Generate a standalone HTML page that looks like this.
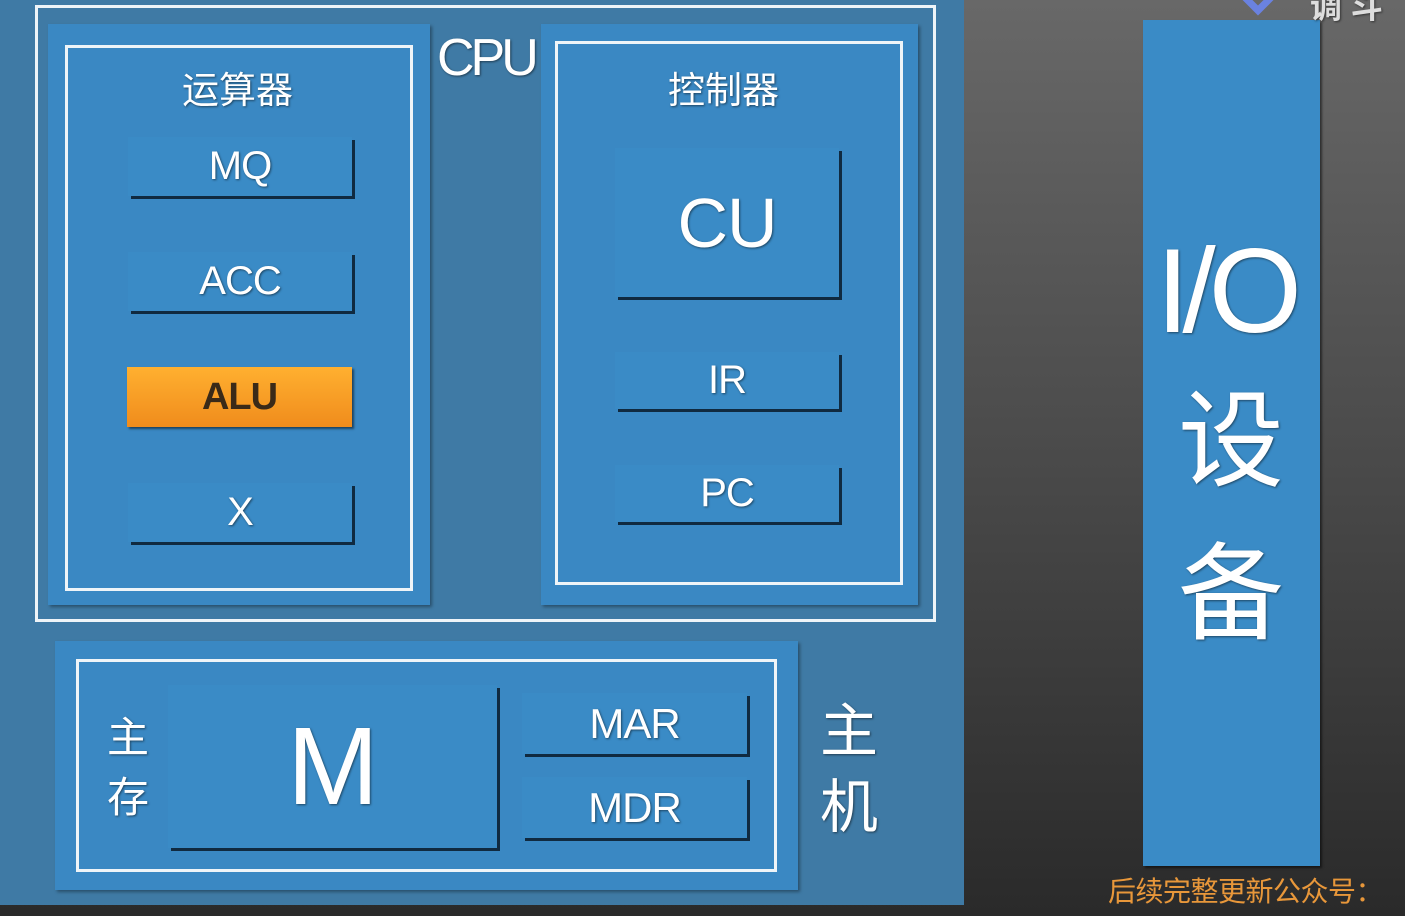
<!DOCTYPE html>
<html><head><meta charset="utf-8"><style>
*{margin:0;padding:0;box-sizing:border-box}
body{width:1405px;height:916px;overflow:hidden;position:relative;background:linear-gradient(180deg,#686868 0%,#4a4a4a 50%,#2a2a2a 100%);font-family:"Liberation Sans","Noto Sans CJK SC",sans-serif;color:#fff}
.a{position:absolute}
.panel{left:0;top:0;width:964px;height:905px;background:#3f7aa5}
.sec{background:#3a88c3;box-shadow:2px 2px 3px rgba(0,0,0,.35)}
.ol{border:3px solid #eef4f8;}
.box{background:#3a8bc6;box-shadow:3px 3px 0 #102a40;display:flex;align-items:center;justify-content:center;color:#fff;text-shadow:1px 1px 2px rgba(0,0,0,.5);letter-spacing:-1px}
.t{color:#fff;text-shadow:1px 1px 2px rgba(0,0,0,.5);white-space:nowrap}
</style></head><body>
<div class="a" style="left:0;top:0;width:140px;height:8px;background:#222"></div>
<div class="a panel"></div>
<div class="a ol" style="left:35px;top:5px;width:901px;height:617px"></div>
<div class="a sec" style="left:48px;top:24px;width:382px;height:581px"></div>
<div class="a ol" style="left:65px;top:45px;width:348px;height:546px"></div>
<div class="a t" style="left:182px;top:60px;font-size:37px">运算器</div>
<div class="a box" style="left:128px;top:137px;width:224px;height:59px;font-size:40px">MQ</div>
<div class="a box" style="left:128px;top:252px;width:224px;height:59px;font-size:40px">ACC</div>
<div class="a box" style="left:127px;top:367px;width:225px;height:60px;font-size:38px;font-weight:bold;background:linear-gradient(180deg,#ffb030,#f08c1c);color:#3a2a18;text-shadow:none;box-shadow:2px 2px 2px rgba(0,0,0,.5)">ALU</div>
<div class="a box" style="left:128px;top:483px;width:224px;height:59px;font-size:40px">X</div>
<div class="a t" style="left:437px;top:28px;font-size:52px;letter-spacing:-4px">CPU</div>
<div class="a sec" style="left:541px;top:24px;width:377px;height:581px"></div>
<div class="a ol" style="left:555px;top:41px;width:348px;height:544px"></div>
<div class="a t" style="left:668px;top:60px;font-size:37px">控制器</div>
<div class="a box" style="left:615px;top:148px;width:224px;height:149px;font-size:70px">CU</div>
<div class="a box" style="left:615px;top:352px;width:224px;height:57px;font-size:40px">IR</div>
<div class="a box" style="left:615px;top:465px;width:224px;height:57px;font-size:40px">PC</div>
<div class="a sec" style="left:55px;top:641px;width:743px;height:249px"></div>
<div class="a ol" style="left:76px;top:659px;width:701px;height:213px"></div>
<div class="a t" style="left:107px;top:708px;font-size:42px;line-height:60px">主<br>存</div>
<div class="a box" style="left:168px;top:685px;width:329px;height:163px;font-size:110px">M</div>
<div class="a box" style="left:522px;top:693px;width:225px;height:61px;font-size:42px">MAR</div>
<div class="a box" style="left:522px;top:777px;width:225px;height:61px;font-size:42px">MDR</div>
<div class="a t" style="left:820px;top:694px;font-size:58px;line-height:76px">主<br>机</div>
<div class="a" style="left:1143px;top:20px;width:177px;height:846px;background:#3a8bc6;box-shadow:2px 2px 2px rgba(0,0,0,.5)"></div>
<div class="a t" style="left:1156px;top:222px;font-size:120px;letter-spacing:-7px">I/O</div>
<div class="a t" style="left:1178px;top:355px;font-size:106px">设</div>
<div class="a t" style="left:1178px;top:508px;font-size:106px">备</div>
<div class="a" style="left:1240px;top:-28px;width:36px;height:36px;border:7px solid #6a82e0;transform:rotate(45deg)"></div>
<div class="a t" style="left:1310px;top:-18px;font-size:32px;font-weight:bold;color:#ddd">调 斗</div>
<div class="a" style="left:1108px;top:870px;font-size:28px;letter-spacing:-0.5px;color:#e8973a;white-space:nowrap">后续完整更新公众号：</div>
</body></html>
